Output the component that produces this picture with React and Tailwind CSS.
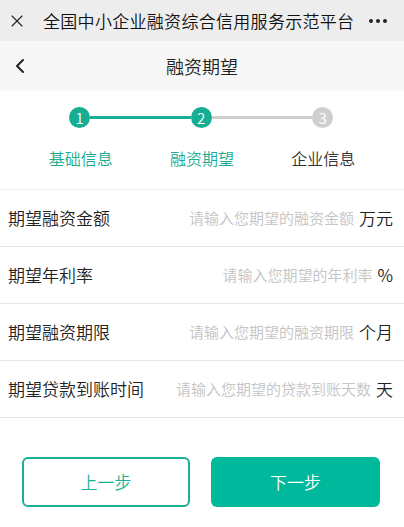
import { X, ChevronLeft } from 'lucide-react'

const steps = [
  { n: 1, label: '基础信息', done: true },
  { n: 2, label: '融资期望', done: true },
  { n: 3, label: '企业信息', done: false },
]

const fields = [
  { label: '期望融资金额', placeholder: '请输入您期望的融资金额', unit: '万元' },
  { label: '期望年利率', placeholder: '请输入您期望的年利率', unit: '%' },
  { label: '期望融资期限', placeholder: '请输入您期望的融资期限', unit: '个月' },
  { label: '期望贷款到账时间', placeholder: '请输入您期望的贷款到账天数', unit: '天' },
]

function Circle({ n, done }) {
  return (
    <div
      className={
        'w-[21px] h-[21px] rounded-full flex items-center justify-center text-[15px] leading-none text-white shrink-0 ' +
        (done ? 'bg-[#16ad92]' : 'bg-[#cfcfcf]')
      }
    >
      {n}
    </div>
  )
}

export default function App() {
  return (
    <div className="w-[404px] h-[527px] bg-white overflow-hidden font-['Noto_Sans_CJK_SC','Noto_Sans',sans-serif] font-[350] text-[#1a1a1a]">
      {/* WeChat top bar */}
      <div className="h-[41px] bg-[#ededed] flex items-center pl-[7px] pr-[10px]">
        <X size={20} strokeWidth={1.3} className="text-[#222]" />
        <div className="ml-[16px] text-[17px] leading-none text-[#111] tracking-[0.3px]">全国中小企业融资综合信用服务示范平台</div>
        <div className="ml-auto mr-[7px] flex gap-[3px]">
          <span className="w-[4px] h-[4px] rounded-full bg-[#222]" />
          <span className="w-[4px] h-[4px] rounded-full bg-[#222]" />
          <span className="w-[4px] h-[4px] rounded-full bg-[#222]" />
        </div>
      </div>

      {/* Page header */}
      <div className="h-[50px] bg-[#f7f7f7] relative flex items-center justify-center">
        <ChevronLeft size={24} strokeWidth={2} className="absolute left-[8px] text-[#222]" />
        <div className="text-[18px] text-[#222] leading-none">融资期望</div>
      </div>

      {/* Stepper */}
      <div className="pt-[16px] pb-[20px] border-b border-[#eeeeee]">
        <div className="flex items-center pl-[69px] pr-[71px]">
          <Circle n={1} done />
          <div className="flex-1 h-[3px] bg-[#16ad92]" />
          <Circle n={2} done />
          <div className="flex-1 h-[3px] bg-[#d0d0d0]" />
          <Circle n={3} />
        </div>
        <div className="grid grid-cols-3 px-[20px] mt-[19px]">
          {steps.map((s) => (
            <div
              key={s.n}
              className={'text-center text-[16px] leading-[22px] ' + (s.done ? 'text-[#1aab90]' : 'text-[#333]')}
            >
              {s.label}
            </div>
          ))}
        </div>
      </div>

      {/* Form rows */}
      <div>
        {fields.map((f) => (
          <div key={f.label} className="h-[57px] border-b border-[#e6e6e6] flex items-center pl-[8px] pr-[11px]">
            <div className="text-[17px] text-[#222] whitespace-nowrap">{f.label}</div>
            <div className="ml-auto flex items-center gap-[5px]">
              <span className="text-[15px] text-[#c4c4c4] whitespace-nowrap">{f.placeholder}</span>
              <span className="text-[17px] text-[#222]">{f.unit}</span>
            </div>
          </div>
        ))}
      </div>

      {/* Buttons */}
      <div className="flex gap-[21px] px-[22px] mt-[39px]">
        <button className="w-[168px] h-[50px] rounded-[6px] border-2 border-[#1ab096] text-[#1ab096] text-[17px] bg-white">
          上一步
        </button>
        <button className="w-[169px] h-[50px] rounded-[6px] bg-[#00b89c] text-white text-[17px]">下一步</button>
      </div>
    </div>
  )
}
